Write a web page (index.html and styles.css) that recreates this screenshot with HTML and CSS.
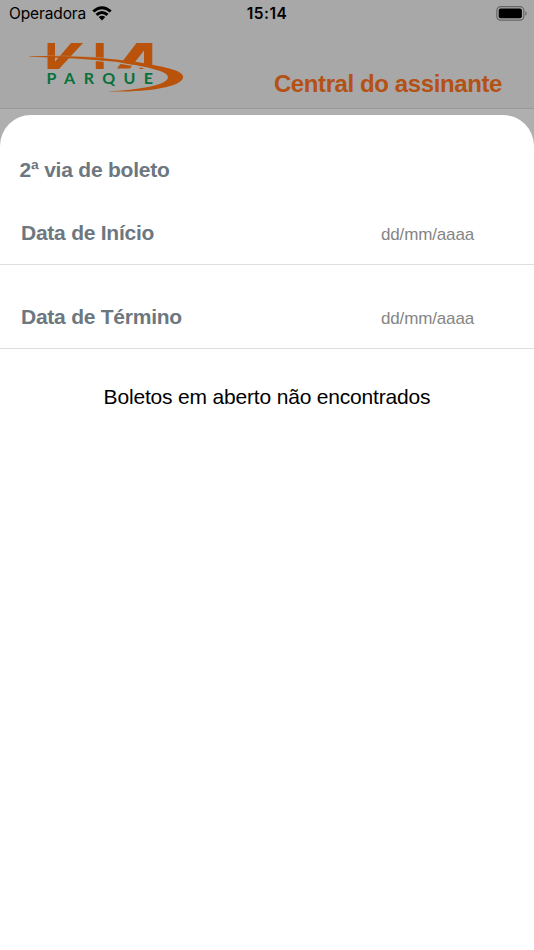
FILE: index.html
```html
<!DOCTYPE html>
<html lang="pt-BR">
<head>
<meta charset="utf-8">
<meta name="viewport" content="width=device-width, initial-scale=1">
<title>Via Parque</title>
<link rel="stylesheet" href="styles.css">
</head>
<body>
<header class="top">
  <div class="status">
    <div class="carrier"><span class="operator">Operadora</span>
      <svg class="wifi" width="20" height="15" viewBox="0 0 20 15"><path d="M.3 4.5Q10-4.2 19.7 4.5L17.7 6.6Q10-.3 2.3 6.6ZM3.5 7.8Q10 2.3 16.5 7.8L14.5 9.9Q10 6.1 5.5 9.9ZM6.7 11.1Q10 8.5 13.3 11.1L10 14.4Z"/></svg>
    </div>
    <time class="clock">15:14</time>
    <svg class="battery" width="31" height="15" viewBox="0 0 31 15"><rect x=".8" y=".7" width="27" height="13.4" rx="3.8" fill="none" stroke="#666" stroke-width="1.2"/><rect x="2.7" y="2.6" width="23.2" height="9.6" rx="2"/><path d="M29.3 5Q32 7.4 29.3 9.8Z" fill="#666"/></svg>
  </div>
  <div class="brandbar">
    <svg class="logo" width="160" height="60" viewBox="28 38 160 60" role="img" aria-label="Via Parque">
      <path fill="#b9530c" d="M47.5 43H55V61.8L71 43H83L59 69H47.5ZM95.8 43H103.7V69H95.8ZM136.5 43H152.3V67H144V50.5L130 68.5H117Z"/>
      <path fill="none" stroke="#b98a69" stroke-width=".8" d="M46 55.9Q76 55.9 104 57.9"/>
      <path fill="none" stroke="#a9a9a9" stroke-width="1.3" d="M84 59.3Q112 61.2 137 66.2"/>
      <path fill="#a9a9a9" d="M135 65.2L153 68V71H144.5L140 69.5V67Z"/>
      <path fill="#b9530c" d="M29.5 56.2Q90 55 137 62.1C161 66.4 184 70 183.2 77.5C181 87.8 144 92.4 107.5 91.5C139 89.6 168 85.5 168 77C168 71 146 66.5 116 61.7Q76 57.8 29.5 56.8ZM140 67.2L144.5 69H139.5Z"/>
      <text class="logo-word" x="46.6" y="84" textLength="106.4" lengthAdjust="spacing">PARQUE</text>
    </svg>
    <h1 class="title">Central do assinante</h1>
  </div>
</header>
<main class="backdrop">
  <section class="sheet">
    <h2 class="heading">2ª via de boleto</h2>
    <div class="row"><span class="label">Data de Início</span><span class="date">dd/mm/aaaa</span></div>
    <div class="row second"><span class="label">Data de Término</span><span class="date">dd/mm/aaaa</span></div>
    <p class="empty">Boletos em aberto não encontrados</p>
  </section>
</main>
</body>
</html>
```
FILE: styles.css
```css
* { box-sizing: border-box; }
body { margin: 0; height: 950px; overflow: hidden; background: #fff; font-family: "Liberation Sans", sans-serif; }
.top { height: 109px; background: #a8a8a8; border-bottom: 1px solid #999; }
.status { height: 28px; display: grid; grid-template-columns: 1fr auto 1fr; align-items: center; padding: 0 7px 0 9px; font: 15.5px/28px Inter, sans-serif; }
.carrier { display: flex; align-items: center; gap: 6px; }
.operator { letter-spacing: -.13px; }
.wifi { margin-top: -2px; }
.clock { margin-left: -2px; font-size: 15.5px; font-weight: 600; letter-spacing: .45px; }
.battery { justify-self: end; margin-top: -1px; }
.brandbar { display: flex; justify-content: space-between; padding: 10px 32px 0 28px; }
.logo { display: block; }
.logo-word { font: bold 16px Lato, sans-serif; fill: #08713a; }
.title { margin: 32px 0 0; font-size: 24px; line-height: 28px; letter-spacing: -.4px; color: #b45115; white-space: nowrap; }
.backdrop { height: 841px; padding-top: 5.5px; background: #afafaf; }
.sheet { height: 836px; overflow: hidden; background: #fff; border-radius: 31px 31px 0 0; }
.heading { margin: 42px 0 0 19.5px; font-size: 21px; line-height: 26px; letter-spacing: -.22px; color: #6c7780; }
.row { display: flex; align-items: center; justify-content: space-between; height: 82px; padding: 20px 60px 0 21px; border-bottom: 1px solid #dedede; }
.row.second { height: 84px; padding-top: 21px; }
.label { font-size: 21px; font-weight: bold; letter-spacing: -.24px; color: #6c7780; }
.date { padding-top: 3px; font-size: 17px; letter-spacing: -.15px; color: #858585; }
.second .date { padding-top: 4px; }
.empty { margin: 34px 0 0; text-align: center; font-size: 21px; line-height: 27px; letter-spacing: -.18px; color: #000; }
```
